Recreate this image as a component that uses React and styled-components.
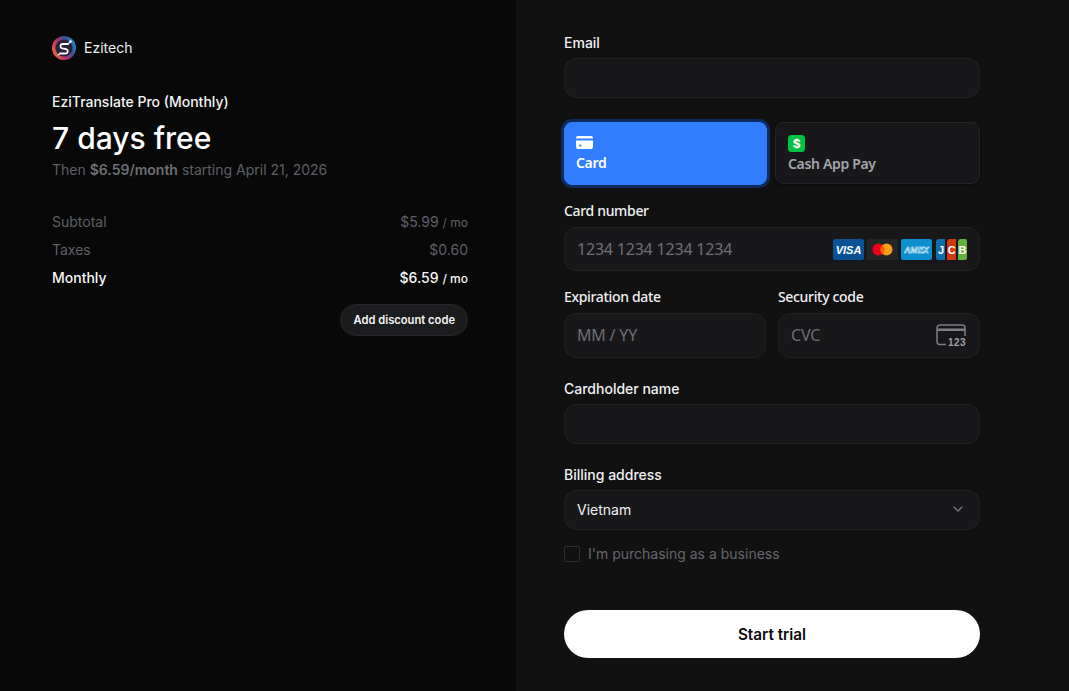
import React from "react";
import styled, { createGlobalStyle } from "styled-components";

const Global = createGlobalStyle`
  html, body { margin: 0; padding: 0; background: #111112; }
  * { box-sizing: border-box; }
  body { font-family: Inter, "Liberation Sans", sans-serif; }
`;

const Page = styled.div`
  width: 1069px;
  height: 691px;
  display: flex;
  overflow: hidden;
  background: #111112;
`;

const Summary = styled.aside`
  width: 516px;
  height: 100%;
  background: #080808;
  padding: 36px 48px 0 52px;
  display: flex;
  flex-direction: column;
`;

const Brand = styled.div`
  display: flex;
  align-items: center;
  gap: 8px;
  height: 24px;
  color: #f0f0f2;
  font-size: 14px;
  line-height: 24px;
`;

const ProductName = styled.div`
  margin-top: 32px;
  color: #f4f4f5;
  font-size: 14px;
  font-weight: 500;
  line-height: 20px;
`;

const Headline = styled.h1`
  margin: 8px 0 0;
  color: #fff;
  font-size: 30px;
  font-weight: 500;
  line-height: 36px;
`;

const Subline = styled.p`
  margin: 4px 0 0;
  color: #5f5f66;
  font-size: 14px;
  line-height: 20px;
  strong { font-weight: 600; color: #6e6e75; }
`;

const Lines = styled.div`
  margin-top: 31px;
  display: flex;
  flex-direction: column;
  gap: 8px;
`;

const Line = styled.div`
  display: flex;
  justify-content: space-between;
  align-items: center;
  height: 20px;
  font-size: 14px;
  font-weight: ${(p) => (p.$strong ? 500 : 400)};
  color: ${(p) => (p.$strong ? "#f7f7f8" : "#5f5f66")};
`;

const Per = styled.span`
  font-size: 12px;
  margin-left: 4px;
`;

const DiscountRow = styled.div`
  margin-top: 17px;
  display: flex;
  justify-content: flex-end;
`;

const Discount = styled.button`
  height: 32px;
  padding: 0 12px;
  border-radius: 16px;
  border: 1px solid #27272a;
  background: #1b1c1e;
  color: #f4f4f5;
  font-family: inherit;
  font-size: 11.2px;
  font-weight: 600;
`;

const Form = styled.main`
  flex: 1;
  padding: 33px 89px 0 48px;
  display: flex;
  flex-direction: column;
`;

const Label = styled.label`
  display: block;
  color: #f0f0f2;
  font-size: 14px;
  font-weight: 500;
  line-height: 20px;
  margin-bottom: 5px;
`;

const Field = styled.div`
  height: ${(p) => p.$h || 40}px;
  border-radius: 12px;
  border: 1px solid #212124;
  background: #18181b;
  display: flex;
  align-items: center;
  justify-content: space-between;
  padding: 0 12px ${(p) => (p.$lift ? 2 : 0)}px;
  font-size: 14px;
  color: #f0f0f2;
`;

const Placeholder = styled.span`
  font-family: "Noto Sans", sans-serif;
  font-size: 16px;
  letter-spacing: -0.2px;
  color: #6e6e73;
`;

const Tabs = styled.div`
  margin-top: 24px;
  display: grid;
  grid-template-columns: 203px 205px;
  gap: 8px;
`;

const Tab = styled.div`
  height: ${(p) => (p.$active ? 63 : 62)}px;
  border-radius: 8px;
  padding: ${(p) => (p.$active ? "13px 11px" : "12px")};
  font-family: "Noto Sans", sans-serif;
  font-size: 14px;
  font-weight: 600;
  letter-spacing: -0.33px;
  line-height: 20px;
  display: flex;
  flex-direction: column;
  gap: ${(p) => (p.$active ? 4 : 2)}px;
  background: ${(p) => (p.$active ? "#317dff" : "#18181a")};
  border: 1px solid ${(p) => (p.$active ? "#317dff" : "#242427")};
  color: ${(p) => (p.$active ? "#fff" : "#a5a5aa")};
  box-shadow: ${(p) => (p.$active ? "0 0 0 3px #0f2a5c" : "0 1px 3px rgba(0,0,0,.4)")};
  svg { flex: none; }
`;

const CardLabel = styled(Label)`
  font-family: "Noto Sans", sans-serif;
  letter-spacing: -0.33px;
  margin-top: ${(p) => p.$mt || 0}px;
  margin-bottom: 6px;
`;

const Row = styled.div`
  display: grid;
  grid-template-columns: 202px 202px;
  gap: 12px;
  margin-top: 16px;
`;

const Logos = styled.div`
  display: flex;
  align-items: center;
  gap: 3px;
  svg:last-child { margin-left: 1px; }
`;

const Section = styled.div`
  margin-top: ${(p) => p.$mt}px;
`;

const Check = styled.div`
  margin-top: 14px;
  display: flex;
  align-items: center;
  gap: 8px;
  color: #66666c;
  font-size: 14px;
  line-height: 20px;
`;

const Box = styled.span`
  width: 16px;
  height: 16px;
  border-radius: 2px;
  border: 1px solid #2e2e32;
`;

const Submit = styled.button`
  margin-top: 46px;
  height: 48px;
  border: 0;
  border-radius: 24px;
  background: #fff;
  color: #0a0a0a;
  font-family: inherit;
  font-size: 15.3px;
  font-weight: 600;
`;

const CvcWrap = styled.span`
  display: flex;
  margin-right: 1px;
`;

const ChevronWrap = styled.span`
  display: flex;
  margin-right: 3px;
`;

const Logo = () => (
  <svg width="24" height="24" viewBox="0 0 24 24">
    <defs>
      <linearGradient id="lg" x1="0" y1="0.7" x2="1" y2="0.2">
        <stop offset="0" stopColor="#ec6a3c" />
        <stop offset="0.35" stopColor="#b8306a" />
        <stop offset="0.7" stopColor="#34549c" />
        <stop offset="1" stopColor="#1f9ad8" />
      </linearGradient>
    </defs>
    <circle cx="12" cy="12" r="12" fill="url(#lg)" />
    <circle cx="12" cy="12" r="8.6" fill="#2a2238" />
    <path d="M16 8H10.5a2.2 2.2 0 0 0-.5 4.3l4.2.9a2.2 2.2 0 0 1-.5 4.3H8" fill="none" stroke="#fff" strokeWidth="1.8" strokeLinecap="round" />
    <path d="M16 8l2.5-2.5M8 17.5l-2 1.5" stroke="#e8e8f0" strokeWidth="1.2" strokeLinecap="round" />
    <circle cx="18.5" cy="5.5" r="1.2" fill="#fff" />
  </svg>
);

const CardIcon = () => (
  <svg width="17" height="13" viewBox="0 0 17 13">
    <path d="M2 0h13a2 2 0 0 1 2 2v.5H0V2a2 2 0 0 1 2-2z" fill="#fff" />
    <path d="M0 4.5h17V11a2 2 0 0 1-2 2H2a2 2 0 0 1-2-2z" fill="#fff" />
    <rect x="3" y="8.5" width="2.5" height="2" rx="1" fill="#317dff" />
  </svg>
);

const CashIcon = () => (
  <svg width="17" height="17" viewBox="0 0 17 17">
    <rect width="17" height="17" rx="3.5" fill="#00c244" />
    <text x="8.5" y="13" textAnchor="middle" fontFamily="Inter, sans-serif" fontSize="12" fontWeight="700" fill="#fff">$</text>
  </svg>
);

const Visa = () => (
  <svg width="31" height="21" viewBox="0 0 31 21">
    <rect width="31" height="21" rx="2" fill="#0a5296" />
    <text x="15.5" y="14.5" textAnchor="middle" fontFamily="Liberation Sans, sans-serif" fontStyle="italic" fontWeight="700" fontSize="11" fill="#fff">VISA</text>
  </svg>
);

const Master = () => (
  <svg width="31" height="21" viewBox="0 0 31 21">
    <rect width="31" height="21" rx="2" fill="#252525" />
    <circle cx="11.5" cy="10.5" r="6" fill="#eb001b" />
    <circle cx="19.5" cy="10.5" r="6" fill="#f79e1b" />
    <path d="M15.5 6a6 6 0 0 1 0 9 6 6 0 0 1 0-9z" fill="#ff5f00" />
  </svg>
);

const Amex = () => (
  <svg width="31" height="21" viewBox="0 0 31 21">
    <rect width="31" height="21" rx="2" fill="#0d8fcf" />
    <text x="15.5" y="13.5" textAnchor="middle" fontFamily="Liberation Sans, sans-serif" fontStyle="italic" fontWeight="700" fontSize="8.5" fill="#0d8fcf" stroke="#fff" strokeWidth="0.45">AMEX</text>
  </svg>
);

const Jcb = () => (
  <svg width="31" height="21" viewBox="0 0 31 21">
    <path d="M3 0h6v21H2a2 2 0 0 1-2-2V3a3 3 0 0 1 3-3z" fill="#0f6fa8" />
    <path d="M14 0h6v21h-9V3a3 3 0 0 1 3-3z" fill="#d0380f" />
    <path d="M25 0h4a2 2 0 0 1 2 2v17a2 2 0 0 1-2 2h-7V3a3 3 0 0 1 3-3z" fill="#63b23d" />
    <g fontFamily="Liberation Sans, sans-serif" fontWeight="700" fontSize="11" fill="#fff" textAnchor="middle">
      <text x="5" y="14.5">J</text>
      <text x="15.8" y="14.5">C</text>
      <text x="26.5" y="14.5">B</text>
    </g>
  </svg>
);

const CvcIcon = () => (
  <svg width="30" height="22" viewBox="0 0 30 22">
    <path d="M10 20.5H4a3 3 0 0 1-3-3V4a3 3 0 0 1 3-3h22a3 3 0 0 1 3 3v8" fill="none" stroke="#7e7e82" strokeWidth="1.5" />
    <rect x="1" y="4.5" width="28" height="2.5" fill="#7e7e82" />
    <text x="30" y="21.5" textAnchor="end" fontFamily="Liberation Sans, sans-serif" fontWeight="700" fontSize="10" letterSpacing="0.4" fill="#a0a0a4">123</text>
  </svg>
);

const Chevron = () => (
  <svg width="12" height="12" viewBox="0 0 12 12">
    <path d="M2 4l4 4 4-4" fill="none" stroke="#77777c" strokeWidth="1.3" strokeLinecap="round" strokeLinejoin="round" />
  </svg>
);

export default function App() {
  return (
    <Page>
      <Global />
      <Summary>
        <Brand>
          <Logo />
          Ezitech
        </Brand>
        <ProductName>EziTranslate Pro (Monthly)</ProductName>
        <Headline>7 days free</Headline>
        <Subline>
          Then <strong>$6.59/month</strong> starting April 21, 2026
        </Subline>
        <Lines>
          <Line>
            <span>Subtotal</span>
            <span>$5.99<Per>/ mo</Per></span>
          </Line>
          <Line>
            <span>Taxes</span>
            <span>$0.60</span>
          </Line>
          <Line $strong>
            <span>Monthly</span>
            <span>$6.59<Per>/ mo</Per></span>
          </Line>
        </Lines>
        <DiscountRow>
          <Discount>Add discount code</Discount>
        </DiscountRow>
      </Summary>
      <Form>
        <Label>Email</Label>
        <Field />
        <Tabs>
          <Tab $active>
            <CardIcon />
            Card
          </Tab>
          <Tab>
            <CashIcon />
            Cash App Pay
          </Tab>
        </Tabs>
        <CardLabel $mt={16}>Card number</CardLabel>
        <Field $h={44}>
          <Placeholder>1234 1234 1234 1234</Placeholder>
          <Logos>
            <Visa />
            <Master />
            <Amex />
            <Jcb />
          </Logos>
        </Field>
        <Row>
          <div>
            <CardLabel>Expiration date</CardLabel>
            <Field $h={45} $lift>
              <Placeholder>MM / YY</Placeholder>
            </Field>
          </div>
          <div>
            <CardLabel>Security code</CardLabel>
            <Field $h={45} $lift>
              <Placeholder>CVC</Placeholder>
              <CvcWrap>
                <CvcIcon />
              </CvcWrap>
            </Field>
          </div>
        </Row>
        <Section $mt={21}>
          <Label>Cardholder name</Label>
          <Field />
        </Section>
        <Section $mt={21}>
          <Label>Billing address</Label>
          <Field $lift>
            <span>Vietnam</span>
            <ChevronWrap>
              <Chevron />
            </ChevronWrap>
          </Field>
        </Section>
        <Check>
          <Box />
          I'm purchasing as a business
        </Check>
        <Submit>Start trial</Submit>
      </Form>
    </Page>
  );
}
